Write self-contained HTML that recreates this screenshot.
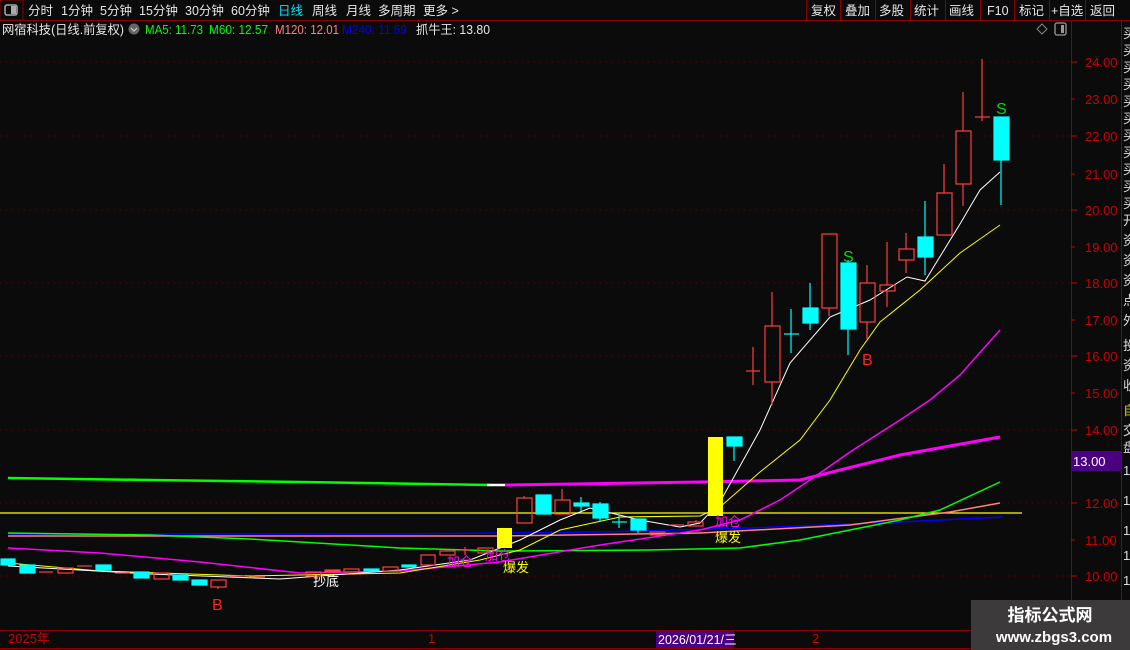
<!DOCTYPE html>
<html><head><meta charset="utf-8"><style>
*{margin:0;padding:0;box-sizing:border-box}
body{width:1130px;height:650px;background:#0b0b0b;overflow:hidden;position:relative;font-family:"Liberation Sans","Noto Sans CJK SC",sans-serif;color:#ddd;font-size:12.5px}
.a{position:absolute;white-space:nowrap}
</style></head><body>
<svg class="a" style="left:0;top:0" width="1130" height="650" xmlns="http://www.w3.org/2000/svg" font-family="Liberation Sans, Noto Sans CJK SC, sans-serif">
<line x1="0" y1="20.5" x2="1130" y2="20.5" stroke="#8a0000"/>
<rect x="0" y="0" width="23" height="20" fill="none" stroke="#8a0000"/>
<rect x="5" y="5" width="12" height="10" rx="2" fill="none" stroke="#aaa" stroke-width="1.5"/><rect x="11" y="6" width="5" height="8" fill="#aaa"/>
<g fill="#e6e6e6" font-size="12.5">
<text x="28" y="15">分时</text><text x="61" y="15">1分钟</text><text x="100" y="15">5分钟</text><text x="139" y="15">15分钟</text><text x="185" y="15">30分钟</text><text x="231" y="15">60分钟</text>
<text x="278" y="15" fill="#00e5ff">日线</text><text x="312" y="15">周线</text><text x="346" y="15">月线</text><text x="378" y="15">多周期</text><text x="423" y="15">更多 &gt;</text>
<text x="811" y="15">复权</text><text x="845" y="15">叠加</text><text x="879" y="15">多股</text><text x="914" y="15">统计</text><text x="949" y="15">画线</text><text x="987" y="15">F10</text><text x="1019" y="15">标记</text><text x="1051" y="15">+自选</text><text x="1090" y="15">返回</text>
</g>
<g stroke="#8a0000"><line x1="806.5" y1="0" x2="806.5" y2="20"/><line x1="840.5" y1="0" x2="840.5" y2="20"/><line x1="875.5" y1="0" x2="875.5" y2="20"/><line x1="910.5" y1="0" x2="910.5" y2="20"/><line x1="945.5" y1="0" x2="945.5" y2="20"/><line x1="980.5" y1="0" x2="980.5" y2="20"/><line x1="1014.5" y1="0" x2="1014.5" y2="20"/><line x1="1049.5" y1="0" x2="1049.5" y2="20"/><line x1="1085.5" y1="0" x2="1085.5" y2="20"/>
<line x1="1071.5" y1="20" x2="1071.5" y2="650"/><line x1="1121.5" y1="20" x2="1121.5" y2="650"/>
<line x1="0" y1="630.5" x2="1071" y2="630.5"/><line x1="0" y1="648.5" x2="1071" y2="648.5"/></g>
<g font-size="12.5"><text x="2" y="34" fill="#e6e6e6" textLength="122" lengthAdjust="spacingAndGlyphs">网宿科技(日线.前复权)</text>
<circle cx="134" cy="29" r="5.5" fill="#666"/><path d="M131 28l3 3 3-3" stroke="#ccc" fill="none" stroke-width="1.2"/>
<text x="145" y="34" fill="#00ff00" textLength="58" lengthAdjust="spacingAndGlyphs">MA5: 11.73</text><text x="209" y="34" fill="#00ff00" textLength="59" lengthAdjust="spacingAndGlyphs">M60: 12.57</text><text x="275" y="34" fill="#ff8080" textLength="64" lengthAdjust="spacingAndGlyphs">M120: 12.01</text><text x="342" y="34" fill="#0000ff" textLength="65" lengthAdjust="spacingAndGlyphs">M240: 11.59</text><text x="416" y="34" fill="#e6e6e6" textLength="74" lengthAdjust="spacingAndGlyphs">抓牛王: 13.80</text></g>
<path d="M1042 24l5 5-5 5-5-5z" stroke="#888" fill="none"/>
<rect x="1055" y="23" width="11" height="12" rx="2" fill="none" stroke="#999" stroke-width="1.3"/><rect x="1061" y="25" width="3" height="8" fill="#999"/>
<g stroke="#6a0000" stroke-dasharray="1 5"><line x1="0" y1="62" x2="1070" y2="62"/><line x1="0" y1="136" x2="1070" y2="136"/><line x1="0" y1="210" x2="1070" y2="210"/><line x1="0" y1="283" x2="1070" y2="283"/><line x1="0" y1="356" x2="1070" y2="356"/><line x1="0" y1="430" x2="1070" y2="430"/><line x1="0" y1="503" x2="1070" y2="503"/><line x1="0" y1="576" x2="1070" y2="576"/></g>
<g fill="#cc0000" font-size="13" stroke="#cc0000">
<g stroke-width="1"><line x1="1071" y1="62" x2="1077" y2="62"/><line x1="1071" y1="99" x2="1075" y2="99"/><line x1="1071" y1="136" x2="1077" y2="136"/><line x1="1071" y1="174" x2="1075" y2="174"/><line x1="1071" y1="210" x2="1077" y2="210"/><line x1="1071" y1="247" x2="1075" y2="247"/><line x1="1071" y1="283" x2="1077" y2="283"/><line x1="1071" y1="320" x2="1075" y2="320"/><line x1="1071" y1="356" x2="1077" y2="356"/><line x1="1071" y1="393" x2="1075" y2="393"/><line x1="1071" y1="430" x2="1077" y2="430"/><line x1="1071" y1="503" x2="1077" y2="503"/><line x1="1071" y1="540" x2="1075" y2="540"/><line x1="1071" y1="576" x2="1077" y2="576"/></g>
<g stroke="none"><text x="1085" y="67">24.00</text><text x="1085" y="104">23.00</text><text x="1085" y="141">22.00</text><text x="1085" y="179">21.00</text><text x="1085" y="215">20.00</text><text x="1085" y="252">19.00</text><text x="1085" y="288">18.00</text><text x="1085" y="325">17.00</text><text x="1085" y="361">16.00</text><text x="1085" y="398">15.00</text><text x="1085" y="435">14.00</text><text x="1085" y="471">13.00</text><text x="1085" y="508">12.00</text><text x="1085" y="545">11.00</text><text x="1085" y="581">10.00</text></g></g>
<rect x="1071" y="451" width="50" height="20" fill="#4b0082"/><text x="1073" y="466" fill="#fff" font-size="13">13.00</text>
<g fill="#ddd" font-size="13"><text x="1123" y="38">买</text><text x="1123" y="55">买</text><text x="1123" y="72">买</text><text x="1123" y="89">买</text><text x="1123" y="106">买</text><text x="1123" y="123">买</text><text x="1123" y="140">买</text><text x="1123" y="157">买</text><text x="1123" y="174">买</text><text x="1123" y="191">买</text><text x="1123" y="208">买</text><text x="1123" y="225">开</text><text x="1123" y="245">资</text><text x="1123" y="265">资</text><text x="1123" y="285">资</text><text x="1123" y="305">点</text><text x="1123" y="325">外</text><text x="1123" y="350">投</text><text x="1123" y="370">资</text><text x="1123" y="390">收</text><text x="1123" y="415" fill="#cc0">自</text><text x="1123" y="435">交</text><text x="1123" y="452">盘</text><text x="1123" y="475">1</text><text x="1123" y="505">1</text><text x="1123" y="535">1</text><text x="1123" y="560">1</text><text x="1123" y="585">1</text><text x="1123" y="610">1</text></g>
<g fill="none">
<polyline points="8,478 150,480 300,482 490,485" stroke="#00ff00" stroke-width="2.5"/>
<polyline points="487,485 505,485" stroke="#fff" stroke-width="2.5"/>
<polyline points="505,485 700,482 800,480 900,455 1000,437" stroke="#ff00ff" stroke-width="3"/>
<line x1="0" y1="513" x2="1022" y2="513" stroke="#ffff00" stroke-width="1.2"/>
<polyline points="8,534 400,534 600,532 750,528 900,522 1003,517" stroke="#0000ff" stroke-width="1.5"/>
<polyline points="8,536 300,536 500,536 700,533 850,525 950,512 1000,503" stroke="#ff8080" stroke-width="1.5"/>
<polyline points="8,533 150,535 250,539 400,548 500,551 650,550 740,548 800,540 850,530 900,520 940,510 1000,482" stroke="#00ff00" stroke-width="1.5"/>
<polyline points="8,548 100,553 200,562 300,573 400,571 500,562 600,545 700,530 740,520 780,500 810,480 850,452 900,420 930,400 960,375 1000,330" stroke="#ff00ff" stroke-width="1.5"/>
<polyline points="8,563 100,571 250,576 400,573 480,560 520,550 560,530 620,517 700,516 720,507 760,472 800,440 830,400 860,350 880,322 920,290 960,253 1000,225" stroke="#ffff00" stroke-width="1"/>
<polyline points="8,566 150,574 280,579 400,570 470,560 520,540 560,520 590,508 640,520 680,527 700,523 720,502 760,430 790,363 830,317 870,300 907,277 925,281 960,224 980,190 1000,172" stroke="#fff" stroke-width="1"/>
</g>
<g stroke-width="1.2">
<g fill="#00ffff" stroke="#00ffff">
<rect x="1" y="559" width="14" height="6"/><rect x="20" y="565" width="15" height="8"/><rect x="96" y="565" width="15" height="5"/><rect x="134" y="572" width="15" height="6"/><rect x="173" y="575" width="15" height="5"/><rect x="192" y="580" width="15" height="5"/><rect x="364" y="569" width="15" height="2"/><rect x="402" y="565" width="14" height="2"/>
<rect x="536" y="495" width="15" height="19"/><rect x="574" y="503" width="15" height="3"/><line x1="581" y1="497" x2="581" y2="511"/><rect x="593" y="504" width="15" height="14"/><line x1="600" y1="502" x2="600" y2="521"/><line x1="612" y1="522" x2="627" y2="522"/><line x1="619" y1="515" x2="619" y2="528"/><rect x="631" y="519" width="15" height="11"/><line x1="638" y1="530" x2="638" y2="533"/>
<rect x="727" y="437" width="15" height="9"/><line x1="734" y1="446" x2="734" y2="461"/>
<line x1="784" y1="334" x2="799" y2="334"/><line x1="791" y1="309" x2="791" y2="353"/>
<rect x="803" y="308" width="15" height="15"/><line x1="810" y1="283" x2="810" y2="330"/>
<rect x="841" y="263" width="15" height="66"/><line x1="848" y1="260" x2="848" y2="355"/>
<rect x="918" y="237" width="15" height="20"/><line x1="925" y1="201" x2="925" y2="275"/>
<rect x="994" y="117" width="15" height="43"/><line x1="1001" y1="160" x2="1001" y2="205"/>
</g>
<g fill="none" stroke="#ff4040">
<line x1="39" y1="572" x2="53" y2="572"/><rect x="58" y="568" width="15" height="5"/><line x1="77" y1="566" x2="92" y2="566"/><line x1="115" y1="573" x2="130" y2="573"/><rect x="154" y="573" width="15" height="6"/><rect x="211" y="580" width="15" height="7"/><line x1="218" y1="587" x2="218" y2="589"/><line x1="230" y1="576" x2="245" y2="576"/><line x1="249" y1="577" x2="265" y2="577"/>
<rect x="306" y="572" width="15" height="4"/><rect x="325" y="570" width="15" height="2" fill="#ff4040"/><rect x="344" y="569" width="15" height="3"/><rect x="383" y="567" width="15" height="4"/>
<rect x="421" y="555" width="14" height="10"/><rect x="440" y="551" width="15" height="4"/><line x1="459" y1="550" x2="470" y2="550"/><line x1="465" y1="547" x2="465" y2="555"/><rect x="478" y="548" width="15" height="5"/>
<rect x="517" y="498" width="15" height="25"/><line x1="524" y1="496" x2="524" y2="498"/><rect x="555" y="500" width="15" height="14"/><line x1="562" y1="489" x2="562" y2="500"/>
<rect x="650" y="532" width="15" height="3"/><line x1="669" y1="525" x2="684" y2="525"/><rect x="688" y="522" width="15" height="4"/><line x1="696" y1="520" x2="696" y2="522"/>
<line x1="746" y1="371" x2="760" y2="371"/><line x1="753" y1="347" x2="753" y2="385"/>
<rect x="765" y="326" width="15" height="56"/><line x1="772" y1="292" x2="772" y2="326"/><line x1="772" y1="382" x2="772" y2="405"/>
<rect x="822" y="234" width="15" height="74"/><line x1="829" y1="308" x2="829" y2="316"/>
<rect x="860" y="283" width="15" height="39"/><line x1="867" y1="265" x2="867" y2="283"/><line x1="867" y1="322" x2="867" y2="339"/>
<rect x="880" y="285" width="15" height="6"/><line x1="887" y1="242" x2="887" y2="285"/><line x1="887" y1="291" x2="887" y2="307"/>
<rect x="899" y="249" width="15" height="11"/><line x1="906" y1="233" x2="906" y2="249"/><line x1="906" y1="260" x2="906" y2="273"/>
<rect x="937" y="193" width="15" height="42"/><line x1="944" y1="164" x2="944" y2="193"/>
<rect x="956" y="131" width="15" height="53"/><line x1="963" y1="92" x2="963" y2="131"/><line x1="963" y1="184" x2="963" y2="206"/>
<line x1="975" y1="117" x2="990" y2="117"/><line x1="982" y1="59" x2="982" y2="121"/>
</g>
<rect x="497" y="528" width="15" height="20" fill="#ffff00"/><rect x="708" y="437" width="15" height="79" fill="#ffff00"/>
</g>
<g font-size="16"><text x="212" y="610" fill="#ff2020">B</text><text x="862" y="365" fill="#ff2020">B</text>
<text x="843" y="262" fill="#00dd00">S</text><text x="996" y="114" fill="#00dd00">S</text></g>
<g font-size="13">
<text x="313" y="586" fill="#fff">抄底</text><text x="447" y="566" fill="#ff00ff">加仓</text><text x="485" y="560" fill="#ff00ff">加仓</text><text x="503" y="572" fill="#ffff00">爆发</text>
<text x="715" y="526" fill="#ff00ff">加仓</text><text x="715" y="542" fill="#ffff00">爆发</text>
<text x="8" y="643" fill="#cc0000">2025年</text><text x="428" y="643" fill="#cc0000">1</text><text x="812" y="643" fill="#cc0000">2</text></g>
<rect x="656" y="631" width="78" height="17" fill="#4b0082"/><text x="658" y="644" fill="#fff" font-size="12.5">2026/01/21/三</text>
<rect x="971" y="600" width="159" height="50" fill="#3c3a3a"/>
<text x="1050" y="621" text-anchor="middle" fill="#fff" font-size="17" font-weight="bold">指标公式网</text>
<text x="1054" y="642" text-anchor="middle" fill="#fff" font-size="15" font-weight="bold">www.zbgs3.com</text>
</svg>
</body></html>
